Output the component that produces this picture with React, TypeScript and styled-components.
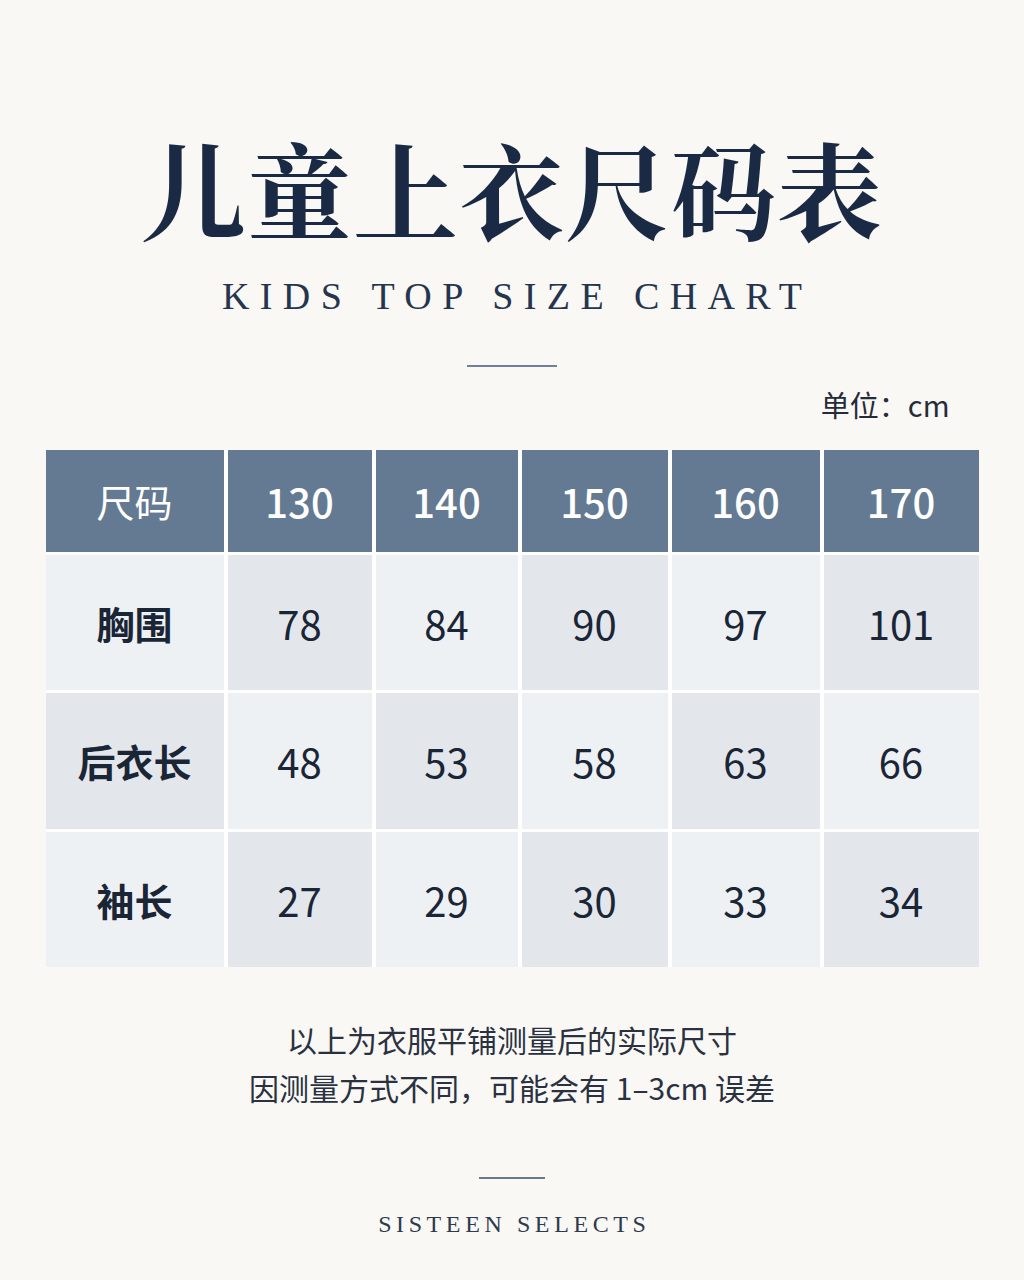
import React from "react";
import styled, { createGlobalStyle } from "styled-components";

const GlobalStyle = createGlobalStyle`
  html, body {
    margin: 0;
    padding: 0;
    background: #f9f8f4;
  }
  body {
    font-family: "Noto Sans CJK SC", "Noto Sans", sans-serif;
    color: #1c2738;
  }
`;

const Page = styled.div`
  width: 1024px;
  min-height: 1280px;
  background: #f9f8f4;
  display: flex;
  flex-direction: column;
  align-items: center;
  padding-top: 134px;
  box-sizing: border-box;
`;

const Title = styled.h1`
  margin: 0;
  font-family: "Noto Serif CJK SC", "Noto Sans CJK SC", serif;
  font-weight: 700;
  font-size: 105px;
  line-height: 105px;
  color: #1a2a44;
  letter-spacing: 1px;
`;

const Subtitle = styled.div`
  margin-top: 38px;
  font-family: "Liberation Serif", "DejaVu Serif", serif;
  font-size: 38px;
  line-height: 38px;
  letter-spacing: 10.4px;
  padding-left: 10.4px;
  color: #26354f;
`;

const Rule = styled.div<{ $w: number }>`
  width: ${(p) => p.$w}px;
  height: 2px;
  background: #6f8196;
`;

const TopRule = styled(Rule)`
  margin-top: 50px;
`;

const UnitRow = styled.div`
  width: 933px;
  margin-top: 23px;
  display: flex;
  justify-content: flex-end;
  padding-right: 29px;
  box-sizing: border-box;
`;

const Unit = styled.span`
  font-size: 29px;
  line-height: 29px;
  color: #252c38;
`;

const Table = styled.div`
  margin-top: 31px;
  width: 933px;
  display: grid;
  grid-template-columns: 178px 144px 142px 146px 148px 155px;
  grid-template-rows: 102px 135px 136px 135px;
  column-gap: 4px;
  row-gap: 3px;
  background: #ffffff;
`;

const Cell = styled.div`
  display: flex;
  align-items: center;
  justify-content: center;
  line-height: 1;
`;

const HeadCell = styled(Cell)`
  background: #637a92;
  color: #ffffff;
  font-size: 40px;
  font-weight: 500;
`;

const HeadLabel = styled(HeadCell)`
  font-size: 38px;
  font-weight: 400;
`;

const BodyCell = styled(Cell)<{ $dark: boolean }>`
  background: ${(p) => (p.$dark ? "#e3e7eb" : "#eef1f4")};
  color: #1a2536;
`;

const LabelCell = styled(BodyCell)`
  font-size: 38px;
  font-weight: 700;
`;

const ValueCell = styled(BodyCell)`
  font-size: 40px;
  font-weight: 400;
`;

const Notes = styled.div`
  margin-top: 48px;
  display: flex;
  flex-direction: column;
  align-items: center;
  font-size: 30px;
  line-height: 48px;
  color: #2a3140;
`;

const BottomRule = styled(Rule)`
  margin-top: 66px;
  background: #6b7888;
`;

const Brand = styled.div`
  margin-top: 33px;
  font-family: "Liberation Serif", "DejaVu Serif", serif;
  font-size: 24px;
  line-height: 24px;
  letter-spacing: 4.6px;
  padding-left: 4.6px;
  color: #2e3a4e;
`;

const sizes = ["130", "140", "150", "160", "170"];
const rows: { label: string; values: string[] }[] = [
  { label: "胸围", values: ["78", "84", "90", "97", "101"] },
  { label: "后衣长", values: ["48", "53", "58", "63", "66"] },
  { label: "袖长", values: ["27", "29", "30", "33", "34"] },
];

export default function App() {
  return (
    <>
      <GlobalStyle />
      <Page>
        <Title>儿童上衣尺码表</Title>
        <Subtitle>KIDS TOP SIZE CHART</Subtitle>
        <TopRule $w={90} />
        <UnitRow>
          <Unit>单位：cm</Unit>
        </UnitRow>
        <Table>
          <HeadLabel>尺码</HeadLabel>
          {sizes.map((s) => (
            <HeadCell key={s}>{s}</HeadCell>
          ))}
          {rows.map((row, r) => (
            <React.Fragment key={row.label}>
              <LabelCell $dark={r % 2 === 1}>{row.label}</LabelCell>
              {row.values.map((v, c) => (
                <ValueCell key={c} $dark={(r + c + 1) % 2 === 1}>
                  {v}
                </ValueCell>
              ))}
            </React.Fragment>
          ))}
        </Table>
        <Notes>
          <span>以上为衣服平铺测量后的实际尺寸</span>
          <span>因测量方式不同，可能会有 1–3cm 误差</span>
        </Notes>
        <BottomRule $w={66} />
        <Brand>SISTEEN SELECTS</Brand>
      </Page>
    </>
  );
}
